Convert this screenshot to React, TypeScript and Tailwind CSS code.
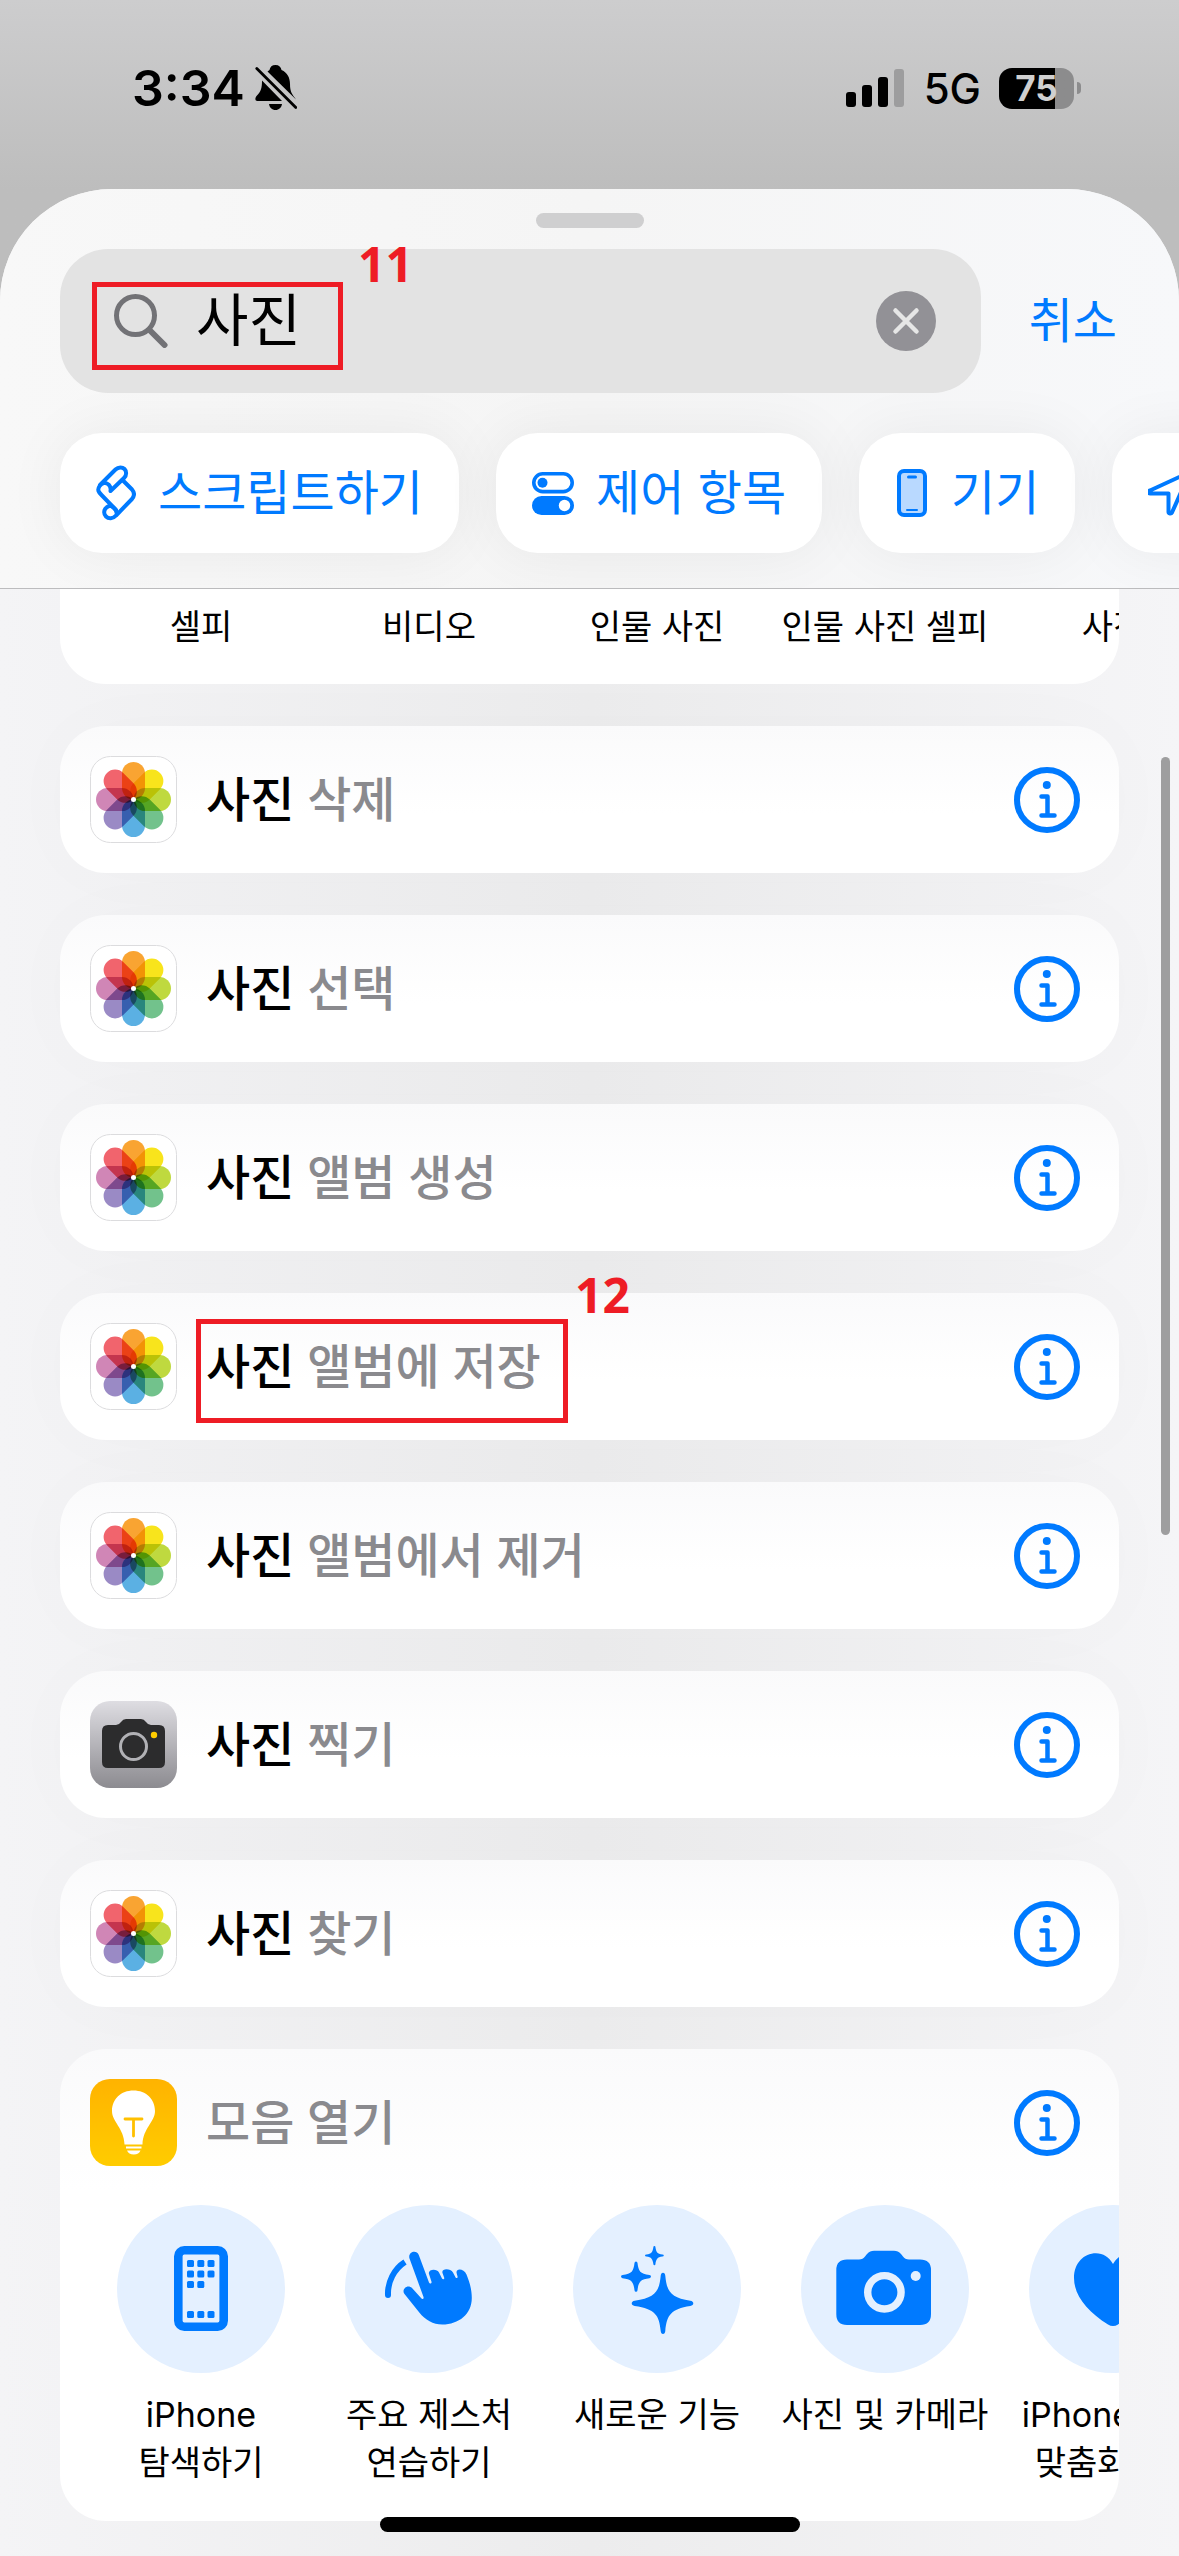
import React from 'react';

type AppIconName = 'photos' | 'camera';

interface Action {
    name: string;
    icon: AppIconName;
    marked?: boolean;
}

const actions: Action[] = [
    { name: '삭제', icon: 'photos' },
    { name: '선택', icon: 'photos' },
    { name: '앨범 생성', icon: 'photos' },
    { name: '앨범에 저장', icon: 'photos', marked: true },
    { name: '앨범에서 제거', icon: 'photos' },
    { name: '찍기', icon: 'camera' },
    { name: '찾기', icon: 'photos' },
];

const cameraModes = ['셀피', '비디오', '인물 사진', '인물 사진 셀피', '사진'];

const petals = [
    { angle: 0, color: '#f9a432' },
    { angle: 45, color: '#f8e41c' },
    { angle: 90, color: '#bfd93f' },
    { angle: 135, color: '#72c28c' },
    { angle: 180, color: '#5bb0e3' },
    { angle: 225, color: '#9a8ac5' },
    { angle: 270, color: '#d086b6' },
    { angle: 315, color: '#f1646d' },
];

const PhotosIcon = () => (
    <svg viewBox="0 0 87 87" className="size-[87px] shrink-0 isolate" aria-hidden="true">
        <rect x="0.5" y="0.5" width="86" height="86" rx="20" fill="#fff" stroke="#dcdcde" />
        {petals.map(({ angle, color }) => (
            <rect
                key={angle}
                x="32"
                y="6"
                width="23"
                height="37.5"
                rx="11.5"
                fill={color}
                transform={`rotate(${angle} 43.5 43.5)`}
                className="mix-blend-multiply"
            />
        ))}
        <circle cx="43.5" cy="43.5" r="2.5" fill="#fff" />
    </svg>
);

const CameraAppIcon = () => (
    <svg viewBox="0 0 87 87" className="size-[87px] shrink-0" aria-hidden="true">
        <defs>
            <linearGradient id="camera-bg" x1="0" y1="0" x2="0" y2="1">
                <stop offset="0" stopColor="#dedde2" />
                <stop offset="1" stopColor="#8c8b90" />
            </linearGradient>
        </defs>
        <rect width="87" height="87" rx="20" fill="url(#camera-bg)" />
        <path d="M18 24h8q3 0 5-3 2-3 5-3h15q3 0 5 3 2 3 5 3h8q6 0 6 6v31q0 6-6 6H18q-6 0-6-6V30q0-6 6-6Z" fill="#2c2c2d" />
        <circle cx="43.5" cy="45.5" r="13" fill="none" stroke="#b1b1b5" strokeWidth="3" />
        <circle cx="64" cy="34" r="3.2" fill="#ffcc00" />
    </svg>
);

const TipsIcon = () => (
    <svg viewBox="0 0 87 87" className="size-[87px] shrink-0" aria-hidden="true">
        <defs>
            <linearGradient id="tips-bg" x1="0" y1="0" x2="0" y2="1">
                <stop offset="0" stopColor="#ffb300" />
                <stop offset="1" stopColor="#ffcc00" />
            </linearGradient>
        </defs>
        <rect width="87" height="87" rx="20" fill="url(#tips-bg)" />
        <path d="M43.5 11.5C31 11.5 22 20 22 32c0 11 12 17 12.5 33.5h18C53 49 65 43 65 32c0-12-9-20.500-21.500-20.500Z" fill="#fff" />
        <path d="M35 40h17M43.500 40v17" stroke="#ffc000" strokeWidth="2.800" strokeLinecap="round" fill="none" />
        <path d="M36 67.500h15.500v2H36zM37 71.500h13.500q-1.500 4-6.700 4t-6.800-4Z" fill="#fff" />
    </svg>
);

const InfoIcon = () => (
    <svg viewBox="0 0 66 66" className="size-[66px]" fill="none" stroke="#007aff" aria-hidden="true">
        <circle cx="33" cy="33" r="30" strokeWidth="6" />
        <path d="M27.5 29.5h6v19M27.5 48.5h13" strokeWidth="4.5" strokeLinecap="round" strokeLinejoin="round" />
        <circle cx="32.8" cy="18" r="4" fill="#007aff" stroke="none" />
    </svg>
);

const BellSlashIcon = () => (
    <svg viewBox="0 0 42 46" className="h-[46px] w-[42px]" aria-hidden="true">
        <path d="M20.5 0c3.500 0 5.500 2 6 5 6 2.500 8.500 8 8.500 14 0 8 2 10 6 15.500L12.500 6.500c.7-.6 1.300-1.200 2-1.600.5-2.900 2.500-4.900 6-4.900ZM7 15.500 27 36H2.500C-.5 36 0 32.500 2 30.500c4-4 5-7.500 5-15ZM14 39h13c-.5 3.500-3 6-6.500 6S14.500 42.500 14 39Z" />
        <path d="m1.8 3.500 39 39" stroke="#000" strokeWidth="2.8" strokeLinecap="round" />
    </svg>
);

const SignalIcon = () => (
    <svg viewBox="0 0 58 38" className="h-[38px] w-[58px]" aria-hidden="true">
        <rect y="23" width="10" height="15" rx="3" />
        <rect x="16" y="16" width="10" height="22" rx="3" />
        <rect x="32" y="8" width="10" height="30" rx="3" />
        <rect x="48" width="10" height="38" rx="3" fill="#9d9d9e" />
    </svg>
);

const ScrollIcon = () => (
    <svg viewBox="0 0 40 56" className="h-14 w-10" fill="none" stroke="#007aff" strokeWidth="4" strokeLinecap="round" strokeLinejoin="round" aria-hidden="true">
        <path d="M4 20 19.500 4.500c3-3 7-2.500 9-.5s2.500 6-.5 9L14.500 26c1-5-3-8.500-6.500-8S1.500 23 2.500 26c.5 1.500 1.500 2.500 3 4L20 45" />
        <path d="m26.500 15 9.500 9.500c2.500 3 2.500 6.500 0 9.500L20 50.500c-3 3.500-7.500 3.500-10 1s-2.500-6.500.5-9c1-1 2.500-1.500 4-2 3.500 2 6 4.500 6 7.500" />
    </svg>
);

const TogglesIcon = () => (
    <svg viewBox="0 0 42 43" className="h-[43px] w-[42px]" aria-hidden="true">
        <rect x="1.8" y="1.8" width="38.4" height="17.8" rx="8.9" fill="none" stroke="#007aff" strokeWidth="3.6" />
        <circle cx="10.5" cy="10.7" r="5" fill="#007aff" />
        <rect y="24" width="42" height="19" rx="9.5" fill="#007aff" />
        <circle cx="32.5" cy="33.5" r="5.7" fill="#fff" />
    </svg>
);

const PhoneIcon = () => (
    <svg viewBox="0 0 30 48" className="mx-[2px] h-12 w-[30px]" aria-hidden="true">
        <rect x="2" y="2" width="26" height="44" rx="5" fill="#b9d9ff" stroke="#007aff" strokeWidth="4" />
        <rect x="10" y="6.5" width="10" height="3" rx="1.5" fill="#007aff" />
        <rect x="9" y="40" width="12" height="2" rx="1" fill="#007aff" />
    </svg>
);

const LocationIcon = () => (
    <svg viewBox="4 0 46 48" className="h-12 w-[46px]" fill="none" stroke="#007aff" strokeWidth="4" strokeLinejoin="round" aria-hidden="true">
        <path d="M6 21.500 46 3 28 43.500c-.8 1.500-3.500 1.200-3.500-.5V24.500H6c-2 0-2.300-2.300 0-3Z" />
    </svg>
);

const IphoneGlyph = () => (
    <>
        <rect x="61.3" y="45.3" width="45.4" height="76.4" rx="6" fill="none" stroke="#007aff" strokeWidth="8.6" />
        {[[70, 55], [80.3, 55], [90.5, 55], [70, 65.5], [80.3, 65.5], [90.5, 65.5], [70, 76], [80.3, 76], [70, 106], [80.3, 106], [90.5, 106]].map(([x, y]) => (
            <rect key={`${x}-${y}`} x={x} y={y} width="7" height="7" rx="1.5" fill="#007aff" />
        ))}
    </>
);

const HandGlyph = () => (
    <>
        <path d="M60 57C49 64 42.500 77 43 90" fill="none" stroke="#007aff" strokeWidth="6" />
        <circle cx="43" cy="90" r="3" fill="#007aff" />
        <path
            d="M64.500 53.500c-2-6.500 7-9.500 9.300-3.500L84 77.500c.6 1.500 3 1 2.500-.8L84 69c-1.500-5 8-6 10-1.500l3 6c.8 1.400 2.600.8 2.200-.8L97.500 68c-1.500-5 8-5 10.500-.5l2.600 5c.8 1.200 2.300.5 2-.8l-1-3.700c-1-5 7.400-4.500 9.900 1.500 3.200 7.800 5.300 15.300 5.300 23.500 0 16-13 26.500-29.500 26.500-9.300 0-17-4.500-23-12L59.500 89c-3.500-4.500 3-10.500 7.500-6l9.500 10.500c1 1 2.500.2 2-1.500Z"
            fill="#007aff"
        />
    </>
);

const SparklesGlyph = () => (
    <path
        d="M90 67.700q2 0 2.300 3c1.500 16 5.500 22 25 25q3 .5 3 2.600t-3 2.600c-19.500 3-23.500 9-25 25q-.3 3-2.300 3t-2.300-3c-1.500-16-5.500-22-26-25q-3-.5-3-2.600t3-2.600c20.500-3 24.500-9 26-25q.3-3 2.300-3ZM63 56.500q1.400 0 1.500 1.500c1 8 2.500 11 12 12q1.500.2 1.500 1.600t-1.500 1.600c-9.500 1-11 4-12 12q-.1 1.500-1.500 1.500t-1.500-1.500c-1-8-2.500-11-12-12q-1.500-.2-1.500-1.600t1.500-1.600c9.500-1 11-4 12-12q.1-1.500 1.500-1.500ZM81.400 41q1 0 1 1c.8 5 1.800 7 7 7.600q1.400.1 1.400 1t-1.400 1c-5.200.6-6.200 2.600-7 7.600q0 1-1 1t-1-1c-.8-5-1.800-7-7-7.600q-1.400-.1-1.400-1t1.400-1c5.200-.6 6.200-2.600 7-7.600q0-1 1-1Z"
        fill="#007aff"
    />
);

const CameraGlyph = () => (
    <>
        <path d="M46 54.500h12q4 0 6-3l2-2.500q3-3.300 7-3.300h20q4 0 7 3.300l2 2.500q2 3 6 3h11q11 0 11 10.500v44q0 11-11 11H46q-10.700 0-10.700-11V65q0-10.500 10.700-10.500Z" fill="#007aff" />
        <circle cx="83.4" cy="87.3" r="16.7" fill="none" stroke="#e4f0ff" strokeWidth="7.4" />
        <circle cx="114.7" cy="71" r="5" fill="#e4f0ff" />
    </>
);

const HeartGlyph = () => (
    <path d="M84 59c-4-7-10-10.700-17-10.700-12 0-22 9.700-22 24.700 0 18 14 34 34 46.500q5 3 10 0c20-12.500 34-28.500 34-46.500 0-15-10-24.700-22-24.700-7 0-13 3.700-17 10.700Z" fill="#007aff" />
);

const tips = [
    { lines: ['iPhone', '탐색하기'], glyph: <IphoneGlyph /> },
    { lines: ['주요 제스처', '연습하기'], glyph: <HandGlyph /> },
    { lines: ['새로운 기능'], glyph: <SparklesGlyph /> },
    { lines: ['사진 및 카메라'], glyph: <CameraGlyph /> },
    { lines: ['iPhone 설정', '맞춤화하기'], glyph: <HeartGlyph /> },
];

const Chip = ({ icon, label }: { icon: React.ReactNode; label: string }) => (
    <button className="flex h-[120px] shrink-0 items-center gap-[22px] rounded-[42px] bg-white px-9 text-[48px] whitespace-nowrap text-[#007aff] shadow-[0_0_60px_rgba(0,0,0,0.06)]">
        {icon}
        {label}
    </button>
);

const InfoButton = ({ label }: { label: string }) => (
    <button aria-label={`${label} 정보`} className="shrink-0">
        <InfoIcon />
    </button>
);

const ActionRow = ({ name, icon, marked }: Action) => (
    <li className="relative flex h-[147px] items-center justify-between rounded-[46px] bg-gradient-to-b from-[#fafafb] to-white to-60% pr-[39px] pl-[30px] shadow-[0_0_80px_rgba(0,0,0,0.02)]">
        <button className="flex items-center gap-[29px] text-[48px] leading-[60px] font-medium text-[#8a8a8e]">
            {icon === 'photos' ? <PhotosIcon /> : <CameraAppIcon />}
            <span>
                <span className="text-black">사진</span> {name}
            </span>
        </button>
        <InfoButton label={`사진 ${name}`} />
        {marked && (
            <>
                <div className="pointer-events-none absolute top-[26px] left-[136px] h-[104px] w-[372px] border-[5px] border-[#ee1c25]" />
                <Mark className="top-[-33px] left-[515px]">12</Mark>
            </>
        )}
    </li>
);

const Mark = ({ className, children }: { className: string; children: React.ReactNode }) => (
    <span className={`pointer-events-none absolute font-['Noto_Sans',sans-serif] text-[48px] leading-[70px] font-bold text-[#ee1c25] ${className}`}>
        {children}
    </span>
);

export default function App() {
    return (
        <div className="relative flex h-screen flex-col overflow-hidden bg-gradient-to-b from-[#cdcdce] to-[#bdbdbd] to-[189px] font-[Inter,'Noto_Sans_CJK_KR',sans-serif] text-black">
            {/* Status bar */}
            <div className="flex h-[189px] shrink-0 items-start justify-between pt-[58px] pr-[98px] pl-[132px]">
                <div className="flex h-[60px] items-center gap-[10px]">
                    <span className="text-[50px] font-semibold">3:34</span>
                    <BellSlashIcon />
                </div>
                <div className="flex h-[60px] items-center">
                    <SignalIcon />
                    <span className="ml-5 text-[42px] font-medium">5G</span>
                    <div className="ml-[18px] flex h-[41px] w-[75px] items-center justify-center rounded-[13px] bg-gradient-to-r from-black from-75% to-[#8c8c8d] to-75% text-[35px] font-bold text-[#d0d0d0]">
                        75
                    </div>
                    <div className="ml-[3px] h-3 w-1 rounded-r-full bg-[#8c8c8d]" />
                </div>
            </div>

            {/* Sheet */}
            <div className="relative flex min-h-0 flex-1 flex-col overflow-hidden rounded-t-[112px] bg-[#f6f6f7]">
                <header className="shrink-0 border-b border-[#bcbcbe] bg-gradient-to-r from-[#f8f8f8] via-[#f5f5f5] to-[#f7f8fa] pt-6 pb-[35px]">
                    <div className="mx-auto h-[15px] w-[108px] rounded-full bg-[#cfcfd0]" />
                    <div className="mt-[21px] flex items-center gap-12 px-[60px]">
                        <label className="relative flex h-36 min-w-0 flex-1 items-center rounded-[48px] bg-[#e3e3e3] pr-[45px] pl-[54px]">
                            <svg viewBox="0 0 54 54" className="size-[54px] shrink-0" fill="none" stroke="#727276" aria-hidden="true">
                                <circle cx="21.5" cy="21.5" r="19" strokeWidth="5" />
                                <path d="m35.5 36 15 15" strokeWidth="6" strokeLinecap="round" />
                            </svg>
                            <input
                                type="text"
                                aria-label="검색"
                                defaultValue="사진"
                                className="ml-7 h-20 min-w-0 flex-1 bg-transparent text-[57px] outline-none"
                            />
                            <button aria-label="지우기" className="shrink-0">
                                <svg viewBox="0 0 60 60" className="size-[60px]" aria-hidden="true">
                                    <circle cx="30" cy="30" r="30" fill="#929196" />
                                    <path d="m19.5 19.5 21 21M40.5 19.5l-21 21" stroke="#e6e6e6" strokeWidth="4.5" strokeLinecap="round" />
                                </svg>
                            </button>
                            <span className="pointer-events-none absolute top-[33px] left-8 h-[88px] w-[251px] border-[5px] border-[#ee1c25]" />
                            <Mark className="top-[-20px] left-[298px]">11</Mark>
                        </label>
                        <button className="shrink-0 pr-[2px] text-[48px] text-[#007aff]">취소</button>
                    </div>
                    <nav className="mt-10 flex gap-[37px] pl-[60px]">
                        <Chip icon={<ScrollIcon />} label="스크립트하기" />
                        <Chip icon={<TogglesIcon />} label="제어 항목" />
                        <Chip icon={<PhoneIcon />} label="기기" />
                        <Chip icon={<LocationIcon />} label="위치" />
                    </nav>
                </header>

                <main className="min-h-0 flex-1 overflow-hidden bg-gradient-to-r from-[#f4f4f6] via-[#ececed] to-[#f5f5f7] px-[60px]">
                    <ul className="flex overflow-hidden rounded-b-[46px] bg-white px-[27px] pt-[14px] pb-[33px] text-[34px] leading-[48px]">
                        {cameraModes.map((mode) => (
                            <li key={mode} className="w-[228px] shrink-0 text-center whitespace-nowrap">
                                {mode}
                            </li>
                        ))}
                    </ul>

                    <ul className="mt-[42px] flex flex-col gap-[42px]">
                        {actions.map((action) => (
                            <ActionRow key={action.name} {...action} />
                        ))}
                    </ul>

                    <section className="mt-[42px] overflow-hidden rounded-[46px] bg-gradient-to-b from-[#fafafb] to-white to-30% pb-[34px]">
                        <div className="flex h-[147px] items-center justify-between pr-[39px] pl-[30px]">
                            <button className="flex items-center gap-[29px] text-[48px] leading-[60px] font-medium text-[#8a8a8e]">
                                <TipsIcon />
                                모음 열기
                            </button>
                            <InfoButton label="모음 열기" />
                        </div>
                        <div className="mt-[9px] flex px-[27px]">
                            {tips.map(({ lines, glyph }) => (
                                <button key={lines[0]} className="flex w-[228px] shrink-0 flex-col items-center gap-[18px] text-[34px] leading-[48px] whitespace-nowrap">
                                    <svg viewBox="0 0 168 168" className="size-[168px] rounded-full bg-[#e4f0ff]" aria-hidden="true">
                                        {glyph}
                                    </svg>
                                    <span className="flex h-24 flex-col items-center">
                                        {lines.map((line) => (
                                            <span key={line}>{line}</span>
                                        ))}
                                    </span>
                                </button>
                            ))}
                        </div>
                    </section>
                </main>

                {/* Scroll thumb */}
                <div className="absolute top-[568px] right-[9px] h-[778px] w-[9px] rounded-full bg-[#9e9e9f]" />
            </div>

            {/* Home indicator */}
            <div className="absolute bottom-6 left-1/2 h-[15px] w-[420px] -translate-x-1/2 rounded-full bg-black" />
        </div>
    );
}
